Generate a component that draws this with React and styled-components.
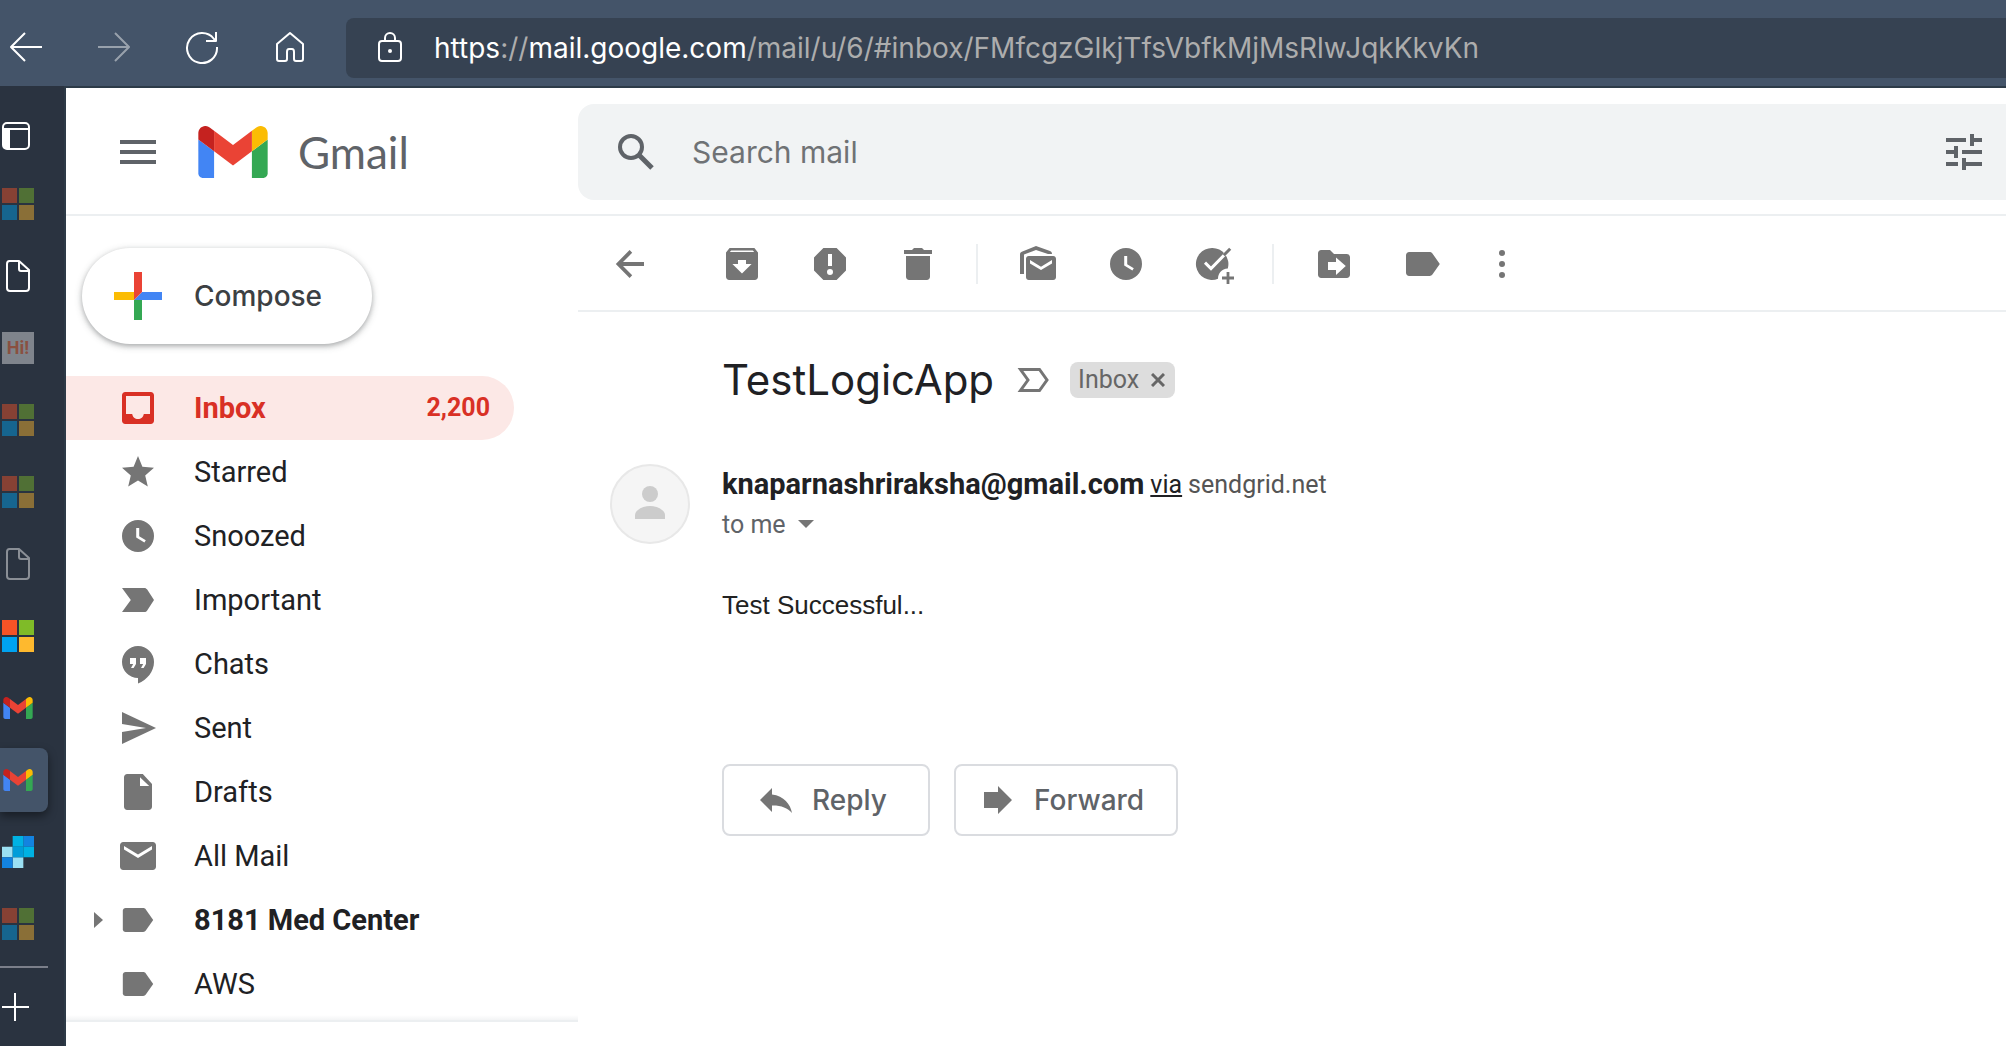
import React from "react";
import styled, { createGlobalStyle } from "styled-components";

const sans = `Roboto, "Liberation Sans", sans-serif`;
const display = `Inter, "Open Sans", sans-serif`;
const grey = "#757575";
const slate = "#5f6368";
const line = "#eceff1";

const GlobalStyle = createGlobalStyle`
  * { box-sizing: border-box; }
  body { margin: 0; background: #fff; font-family: ${sans}; color: #202124; }
  button { border: 0; padding: 0; background: none; font: inherit; color: inherit; cursor: pointer; }
  svg { display: block; flex: none; }
`;

/* ---------- Layout ---------- */

const Browser = styled.div`
  display: flex;
  flex-direction: column;
  min-height: 100vh;
`;

const TopBar = styled.header`
  display: flex;
  align-items: center;
  height: 88px;
  padding: 8px 0 0;
  background: #445469;
  border-bottom: 2px solid #2d3b48;
`;

const TopButtons = styled.div`
  display: flex;
  align-items: center;
  width: 346px;
  flex: none;
`;

const TopButton = styled.button`
  display: flex;
  justify-content: center;
  width: 88px;
  margin-left: ${(p) => (p.$first ? "-18px" : "0")};
  color: #fff;
  opacity: ${(p) => (p.$dim ? 0.45 : 1)};
`;

const AddressBar = styled.div`
  display: flex;
  align-items: center;
  flex: 1;
  min-width: 0;
  height: 60px;
  margin-top: 2px;
  padding-left: 24px;
  gap: 24px;
  border-radius: 8px 0 0 8px;
  background: #364252;
  color: #fff;
`;

const Url = styled.div`
  font: 400 28px/36px Inter, sans-serif;
  white-space: nowrap;
  color: #adadad;
`;

const UrlStrong = styled.span`
  color: #fff;
`;

const Body = styled.div`
  display: flex;
  flex: 1;
`;

const TabRail = styled.nav`
  display: flex;
  flex-direction: column;
  flex: none;
  width: 66px;
  margin-top: -2px;
  padding-top: 18px;
  background: #2a3340;
  border-right: 2px solid #2d3a47;
`;

const TabList = styled.div`
  display: flex;
  flex-direction: column;
  gap: 8px;
  padding: 4px 0 10px;
  border-bottom: 2px solid #7b7f8a;
  width: 48px;
`;

const Tab = styled.button`
  display: flex;
  align-items: center;
  width: 48px;
  height: 64px;
  padding-left: 2px;
  border-radius: 0 8px 8px 0;
  color: #fff;
  background: ${(p) => (p.$active ? "#445469" : "none")};
  box-shadow: ${(p) => (p.$active ? "0 4px 10px rgba(0, 0, 0, 0.45)" : "none")};
`;

const NewTab = styled(Tab)`
  height: 78px;
`;

const Fade = styled.span`
  opacity: ${(p) => (p.$dim ? 0.45 : 1)};
`;

const HiIcon = styled.span`
  display: flex;
  align-items: center;
  justify-content: center;
  width: 32px;
  height: 32px;
  background: #7f848c;
  color: #8a5040;
  font: 700 18px/32px ${sans};
`;

const Mail = styled.div`
  display: flex;
  flex-direction: column;
  flex: 1;
  min-width: 0;
`;

const MailHeader = styled.div`
  display: flex;
  padding: 16px 0 14px;
  border-bottom: 2px solid ${line};
`;

const Brand = styled.div`
  display: flex;
  align-items: center;
  flex: none;
  width: 512px;
  padding-left: 48px;
  gap: 36px;
`;

const IconButton = styled.button`
  display: flex;
  align-items: center;
  justify-content: center;
  flex: none;
  width: 48px;
  height: 48px;
  color: ${slate};
`;

const BrandLink = styled.a`
  display: flex;
  align-items: center;
  gap: 30px;
  color: ${slate};
  font: 400 44px/52px Lato, "Open Sans", sans-serif;
  text-decoration: none;
`;

const Search = styled.form`
  display: flex;
  align-items: center;
  flex: 1;
  min-width: 0;
  height: 96px;
  padding: 0 18px 0 34px;
  gap: 32px;
  border-radius: 16px 0 0 16px;
  background: #f1f3f4;
`;

const SearchInput = styled.input`
  flex: 1;
  min-width: 0;
  border: 0;
  padding: 0;
  outline: 0;
  background: none;
  font: 400 30px/40px ${display};
  color: #202124;
  &::placeholder {
    color: #6f7275;
    opacity: 1;
  }
`;

const Columns = styled.div`
  display: flex;
  flex: 1;
  align-items: flex-start;
`;

const Side = styled.aside`
  flex: none;
  width: 512px;
  padding: 32px 0 4px;
  border-bottom: 2px solid ${line};
  background: linear-gradient(to top, #f3f4f5, #fff 5px);
`;

const Compose = styled.button`
  display: flex;
  align-items: center;
  height: 96px;
  margin: 0 0 32px 16px;
  padding: 0 50px 0 32px;
  gap: 32px;
  border-radius: 48px;
  background: #fff;
  box-shadow: 0 2px 4px rgba(60, 64, 67, 0.3), 0 2px 6px 2px rgba(60, 64, 67, 0.15);
  color: #3c4043;
  font: 500 28px/36px ${display};
`;

const Folder = styled.a`
  display: flex;
  align-items: center;
  height: 64px;
  width: 448px;
  padding: 0 24px 0 22px;
  border-radius: 0 32px 32px 0;
  background: ${(p) => (p.$active ? "#fce8e6" : "none")};
  color: ${(p) => (p.$active ? "#d93025" : "#202124")};
  font-size: 29px;
  line-height: 36px;
  font-weight: ${(p) => (p.$bold ? 700 : 400)};
  text-decoration: none;
`;

const Expander = styled.span`
  width: 30px;
  padding-left: 6px;
  color: ${grey};
`;

const FolderIcon = styled.span`
  margin-right: 36px;
  color: ${(p) => (p.$active ? "#d93025" : grey)};
`;

const Count = styled.span`
  margin-left: auto;
  font-size: 25px;
`;

const Main = styled.main`
  flex: 1;
  min-width: 0;
`;

const Toolbar = styled.div`
  display: flex;
  align-items: center;
  height: 96px;
  padding: 2px 0 0 10px;
  border-bottom: 2px solid ${line};
  color: ${grey};
`;

const Tool = styled.button`
  display: flex;
  align-items: center;
  justify-content: center;
  width: ${(p) => (p.$narrow ? "72px" : "88px")};
  height: 64px;
  margin-right: ${(p) => (p.$spaced ? "22px" : "0")};
`;

const Divider = styled.span`
  width: 2px;
  height: 40px;
  margin: 0 16px 0 14px;
  background: ${line};
`;

const Subject = styled.div`
  display: flex;
  align-items: center;
  padding: 40px 0 56px 144px;
`;

const Title = styled.h1`
  margin: 0;
  font: 400 42px/56px ${display};
`;

const Marker = styled.button`
  margin: 0 16px 0 20px;
  color: ${grey};
`;

const Chip = styled.span`
  display: flex;
  align-items: center;
  height: 36px;
  padding: 0 10px 0 8px;
  gap: 12px;
  border-radius: 8px;
  background: #ddd;
  color: #666;
  font-size: 25px;
  line-height: 32px;
`;

const Message = styled.article`
  display: grid;
  grid-template-columns: 80px 1fr;
  column-gap: 32px;
  padding-left: 32px;
`;

const Line = styled.div`
  display: flex;
  align-items: center;
  height: 40px;
  gap: 6px;
  font-size: ${(p) => (p.$small ? "25px" : "29px")};
  color: ${(p) => (p.$small ? slate : "#202124")};
`;

const Sender = styled.strong`
  font-weight: 700;
`;

const Via = styled.a`
  color: #202124;
  font-size: 25px;
`;

const Domain = styled.span`
  color: #555;
  font-size: 25px;
`;

const Caret = styled.button`
  margin-left: 6px;
  color: ${grey};
`;

const Text = styled.p`
  grid-column: 2;
  margin: 40px 0 138px;
  font: 400 26px/42px "Liberation Sans", Arial, sans-serif;
  color: #222;
`;

const Actions = styled.div`
  grid-column: 2;
  display: flex;
  gap: 24px;
`;

const Action = styled.button`
  display: flex;
  align-items: center;
  height: 72px;
  width: ${(p) => (p.$wide ? "224px" : "208px")};
  padding-left: ${(p) => (p.$wide ? "22px" : "32px")};
  gap: 16px;
  border: 2px solid #dadce0;
  border-radius: 8px;
  color: ${slate};
  font: 500 28px/36px ${display};
`;

const ActionIcon = styled.span`
  color: ${grey};
`;

/* ---------- Icons ---------- */

const Glyph = ({ children, size = 40 }) => (
  <svg width={size} height={size} viewBox="0 0 20 20" fill="currentColor" fillRule="evenodd" aria-hidden="true">
    {children}
  </svg>
);

const Outline = ({ children, w = 36, h = 36 }) => (
  <svg width={w} height={h} viewBox={`0 0 ${w} ${h}`} fill="none" stroke="currentColor" strokeWidth="2" strokeLinejoin="round" aria-hidden="true">
    {children}
  </svg>
);

const GmailMark = ({ width, height }) => (
  <svg width={width} height={height} viewBox="52 42 88 66" aria-hidden="true">
    <path fill="#4285f4" d="M58 108h14V74L52 59v43c0 3.32 2.69 6 6 6" />
    <path fill="#34a853" d="M120 108h14c3.32 0 6-2.69 6-6V59l-20 15" />
    <path fill="#fbbc04" d="M120 48v26l20-15v-8c0-7.42-8.47-11.65-14.4-7.2" />
    <path fill="#ea4335" d="M72 74V48l24 18 24-18v26L96 92" />
    <path fill="#c5221f" d="M52 51v8l20 15V48l-5.6-4.2c-5.94-4.45-14.4-.22-14.4 7.2" />
  </svg>
);

const MicrosoftMark = () => (
  <svg width="32" height="32" viewBox="0 0 32 32" aria-hidden="true">
    <path fill="#f65326" d="M0 0h15v15H0z" />
    <path fill="#7fbb28" d="M17 0h15v15H17z" />
    <path fill="#00a3f0" d="M0 17h15v15H0z" />
    <path fill="#feb92e" d="M17 17h15v15H17z" />
  </svg>
);

const SendgridMark = () => (
  <svg width="32" height="32" viewBox="0 0 33 33" aria-hidden="true">
    <path fill="#9be0f3" d="M0 11h11v11H0zM11 22h11v11H11z" />
    <path fill="#1383e0" d="M0 22h11v11H0zM22 0h11v11H22z" />
    <path fill="#00b2e3" d="M11 0h11v11H11zM22 11h11v11H22z" />
    <path fill="#009dd9" d="M11 11h11v11H11z" />
  </svg>
);

const PageIcon = () => (
  <Outline w={32} h={32}>
    <path d="M7.500 1h9.500L27 10v18c0 1.700-1.300 3-3 3H8c-1.700 0-3-1.300-3-3V4c0-1.700 1-3 2.500-3zM17 1v8c0 1.300.7 2 2 2h8" />
  </Outline>
);

const PanelIcon = () => (
  <Outline w={32} h={32}>
    <rect x="1" y="3" width="26" height="26" rx="4" />
    <path d="M2 9h24" />
    <path d="M1 9h7v20H4c-2 0-3-1-3-3z" fill="currentColor" stroke="none" />
  </Outline>
);

const icons = {
  inbox: <path d="M3.600 2h12.800c.9 0 1.600.7 1.600 1.600v12.800c0 .9-.7 1.600-1.600 1.600H3.600c-.9 0-1.600-.7-1.600-1.600V3.600C2 2.700 2.700 2 3.600 2zM4 4v9h3.100c.2 1.500 1.400 2.500 2.900 2.500s2.700-1 2.900-2.500H16V4z" />,
  star: <path d="M10 14.300l4.900 3-1.300-5.600L18 7.900l-5.800-.5L10 2 7.800 7.400 2 7.900l4.400 3.800-1.300 5.600z" />,
  clock: <path d="M10 2a8 8 0 1 0 0 16 8 8 0 0 0 0-16zM9.100 6h1.500v4.100l3.300 2-.7 1.200-4.100-2.500z" />,
  important: <path d="M2 4h11.200c.6 0 1 .3 1.400.8L18 10l-3.400 5.200c-.4.5-.8.8-1.400.8H2l4.400-6z" />,
  chats: <path d="M10 1a8 8 0 0 0 0 16v2.700c4.600-1.700 8-6 8-10.700a8 8 0 0 0-8-8zM6 7v3h1.600l-1.100 2h1.300L9 10V7zM11 7v3h1.600l-1.100 2h1.300l1.200-2V7z" />,
  sent: <path d="M2 2l17 8-17 8v-6l12-2-12-2z" />,
  drafts: <path d="M4.600 1h7.800L17 6v11.400c0 .9-.7 1.600-1.600 1.600H4.600c-.9 0-1.600-.7-1.600-1.600V2.600C3 1.700 3.700 1 4.600 1zM11 2.600V7h4.600z" />,
  mail: <path d="M2.600 3h14.800c.9 0 1.600.7 1.600 1.600v10.800c0 .9-.7 1.600-1.600 1.600H2.600c-.9 0-1.600-.7-1.600-1.600V4.600C1 3.700 1.700 3 2.600 3zM3 5v1.800l7 4.200 7-4.200V5l-7 4.200z" />,
  tag: <path d="M3.800 4h8.800c.6 0 1 .3 1.300.7l3.700 5.300-3.700 5.300c-.3.400-.7.700-1.300.7H3.800c-.8 0-1.400-.6-1.400-1.400V5.400C2.400 4.600 3 4 3.800 4z" />,
  back: <path d="M16 9H5.500l4.600-4.600L8.800 3 1.900 10l6.900 7 1.300-1.400L5.500 11H16z" />,
  archive: <path d="M16.200 2H3.800L2 4.200v12.200c0 .9.700 1.600 1.600 1.600h12.800c.9 0 1.600-.7 1.600-1.600V4.200zM4.600 3.200h10.800l.7.800H3.900zM10 14.800L5.200 10H8V8h4v2h2.800z" />,
  spam: <path d="M6.700 2h6.600L18 6.700v6.600L13.300 18H6.700L2 13.300V6.700zM9 5v6h2V5zM10 12.500a1.500 1.500 0 1 0 0 3 1.500 1.500 0 0 0 0-3z" />,
  trash: <path d="M13 3l-1-1H8L7 3H3v2h14V3zM4 6v10.400c0 .9.700 1.600 1.600 1.600h8.800c.9 0 1.600-.7 1.600-1.600V6z" />,
  unread: (
    <>
      <path d="M1 15V5.200c0-.7.3-1.100.9-1.300L9 1l7 2.500c.6.200 1 .7 1 1.500h-2L9 3 3 5.200V15z" />
      <path d="M5.400 6h12.200c.8 0 1.400.6 1.400 1.400v9.200c0 .8-.6 1.400-1.400 1.400H5.400c-.8 0-1.400-.6-1.400-1.400V7.400C4 6.600 4.600 6 5.400 6zM6 8v1.700l5.500 3.300L17 9.700V8l-5.500 3.400z" />
    </>
  ),
  task: (
    <>
      <path d="M9 2a8 8 0 1 0 3 15.400c0-2.900 1.800-5 4.900-5.200A8 8 0 0 0 9 2z" />
      <path d="M5.500 9.300l3 3L16.400 4.200" fill="none" stroke="#fff" strokeWidth="1.500" />
      <path d="M14.900 5.600l3.200-3.200" fill="none" stroke="currentColor" strokeWidth="1.500" />
      <path d="M16.300 14h1.400v2.300H20v1.400h-2.300V20h-1.400v-2.300H14v-1.400h2.300z" />
    </>
  ),
  move: <path d="M8 3H3.600C2.700 3 2 3.700 2 4.600v10.800c0 .9.700 1.600 1.600 1.600h12.800c.9 0 1.600-.7 1.600-1.600V6.600c0-.9-.7-1.600-1.600-1.600H10zM7 9v4h4v2.500l4.900-4.500L11 6.700V9z" />,
  label: <path d="M13.800 4H3.600C2.700 4 2 4.700 2 5.600v8.800c0 .9.700 1.600 1.600 1.600h10.200c.6 0 1.100-.3 1.400-.7L18.900 10l-3.700-5.300c-.3-.4-.8-.7-1.400-.7z" />,
  more: (
    <>
      <circle cx="10" cy="4.500" r="1.500" />
      <circle cx="10" cy="10" r="1.500" />
      <circle cx="10" cy="15.500" r="1.500" />
    </>
  ),
  reply: <path d="M8 7.200V4L2 10l6 6v-3.200c4.500-.1 7.800 1.200 10 3.700C17.200 12 14 7.900 8 7.200z" />,
  forward: <path d="M3 6h7V3l7 7-7 7v-3H3z" />,
};

const Icon = ({ name }) => <Glyph>{icons[name]}</Glyph>;

/* ---------- Data ---------- */

const tabs = [
  { title: "Microsoft", mark: <MicrosoftMark />, dim: true },
  { title: "New page", mark: <PageIcon /> },
  { title: "Greeting", mark: <HiIcon>Hi!</HiIcon> },
  { title: "Microsoft", mark: <MicrosoftMark />, dim: true },
  { title: "Microsoft", mark: <MicrosoftMark />, dim: true },
  { title: "Blank page", mark: <PageIcon />, dim: true },
  { title: "Microsoft", mark: <MicrosoftMark /> },
  { title: "Gmail", mark: <GmailMark width={32} height={22} /> },
  { title: "Gmail", mark: <GmailMark width={32} height={22} />, active: true },
  { title: "SendGrid", mark: <SendgridMark /> },
  { title: "Microsoft", mark: <MicrosoftMark />, dim: true },
];

const folders = [
  { name: "Inbox", icon: "inbox", count: "2,200", active: true, bold: true },
  { name: "Starred", icon: "star" },
  { name: "Snoozed", icon: "clock" },
  { name: "Important", icon: "important" },
  { name: "Chats", icon: "chats" },
  { name: "Sent", icon: "sent" },
  { name: "Drafts", icon: "drafts" },
  { name: "All Mail", icon: "mail" },
  { name: "8181 Med Center", icon: "tag", bold: true, nested: true },
  { name: "AWS", icon: "tag" },
];

const toolGroups = [
  [["archive", "Archive"], ["spam", "Report spam"], ["trash", "Delete"]],
  [["unread", "Mark as unread"], ["clock", "Snooze"], ["task", "Add to tasks"]],
  [["move", "Move to"], ["label", "Labels"], ["more", "More"]],
];

/* ---------- Page ---------- */

export default function App() {
  return (
    <Browser>
      <GlobalStyle />
      <TopBar>
        <TopButtons>
          <TopButton $first aria-label="Back">
            <Outline><path d="M34 18H3M17 4L3 18l14 14" /></Outline>
          </TopButton>
          <TopButton $dim aria-label="Forward">
            <Outline><path d="M2 18h31M19 4l14 14-14 14" /></Outline>
          </TopButton>
          <TopButton aria-label="Reload">
            <Outline><path d="M33 18a15 15 0 1 1-3-8l2 2M32 3v9H22" /></Outline>
          </TopButton>
          <TopButton aria-label="Home">
            <Outline><path d="M18 4L5 15v15c0 1 1 2 2 2h6c1 0 2-1 2-2v-7c0-2 1-3 2-3h3c1 0 2 1 2 3v7c0 1 1 2 2 2h5c1 0 2-1 2-2V15z" /></Outline>
          </TopButton>
        </TopButtons>
        <AddressBar>
          <Outline w={40}>
            <rect x="9" y="11" width="22" height="20" rx="3" />
            <path d="M15 11V8a5 5 0 0 1 10 0v3" />
            <circle cx="20" cy="21" r="2" fill="currentColor" stroke="none" />
          </Outline>
          <Url>
            <UrlStrong>https</UrlStrong>://<UrlStrong>mail.google.com</UrlStrong>/mail/u/6/#inbox/FMfcgzGlkjTfsVbfkMjMsRlwJqkKkvKn
          </Url>
        </AddressBar>
      </TopBar>

      <Body>
        <TabRail aria-label="Tabs">
          <Tab aria-label="Tab panel"><PanelIcon /></Tab>
          <TabList>
            {tabs.map((t, i) => (
              <Tab key={i} $active={t.active} aria-label={t.title}>
                <Fade $dim={t.dim}>{t.mark}</Fade>
              </Tab>
            ))}
          </TabList>
          <NewTab aria-label="New tab">
            <Outline w={28} h={28}><path d="M13 0v28M0 14h27" /></Outline>
          </NewTab>
        </TabRail>

        <Mail>
          <MailHeader>
            <Brand>
              <IconButton aria-label="Main menu">
                <svg width="36" height="24" viewBox="0 0 36 24" fill="currentColor" aria-hidden="true">
                  <path d="M0 0h36v4H0zM0 10h36v4H0zM0 20h36v4H0z" />
                </svg>
              </IconButton>
              <BrandLink href="#inbox">
                <GmailMark width={70} height={52} />
                Gmail
              </BrandLink>
            </Brand>
            <Search role="search">
              <IconButton type="button" aria-label="Search">
                <svg width="36" height="36" viewBox="0 0 36 36" fill="none" stroke="currentColor" strokeWidth="4" aria-hidden="true">
                  <circle cx="13" cy="13" r="11" />
                  <path d="M21 21l13 13" strokeWidth="5" />
                </svg>
              </IconButton>
              <SearchInput type="text" aria-label="Search mail" placeholder="Search mail" />
              <IconButton type="button" aria-label="Search options">
                <svg width="36" height="36" viewBox="0 0 36 36" fill="currentColor" aria-hidden="true">
                  <path d="M0 4h20v4H0zM24 0h4v4h8v4h-8v4h-4zM0 16h8v-4h4v12H8v-4H0zM16 16h20v4H16zM0 28h12v4H0zM16 24h4v4h16v4H20v4h-4z" />
                </svg>
              </IconButton>
            </Search>
          </MailHeader>

          <Columns>
            <Side>
              <Compose>
                <svg width="48" height="48" viewBox="0 0 48 48" aria-hidden="true">
                  <path fill="#fbbc04" d="M0 20h20v8H0z" />
                  <path fill="#34a853" d="M20 28h8v20h-8z" />
                  <path fill="#4285f4" d="M28 20h20v8H20z" />
                  <path fill="#ea4335" d="M20 0h8v20l-8 8z" />
                </svg>
                Compose
              </Compose>
              <nav aria-label="Folders">
                {folders.map((f) => (
                  <Folder key={f.name} href="#folder" $active={f.active} $bold={f.bold}>
                    <Expander>
                      {f.nested && (
                        <svg width="9" height="16" viewBox="0 0 9 16" fill="currentColor" aria-hidden="true">
                          <path d="M0 0l9 8-9 8z" />
                        </svg>
                      )}
                    </Expander>
                    <FolderIcon $active={f.active}><Icon name={f.icon} /></FolderIcon>
                    {f.name}
                    {f.count && <Count>{f.count}</Count>}
                  </Folder>
                ))}
              </nav>
            </Side>

            <Main>
              <Toolbar>
                <Tool $spaced aria-label="Back to inbox"><Icon name="back" /></Tool>
                {toolGroups.map((group, g) => (
                  <React.Fragment key={g}>
                    {g > 0 && <Divider />}
                    {group.map(([name, label]) => (
                      <Tool key={name} $narrow={name === "more"} aria-label={label}>
                        <Icon name={name} />
                      </Tool>
                    ))}
                  </React.Fragment>
                ))}
              </Toolbar>

              <Subject>
                <Title>TestLogicApp</Title>
                <Marker aria-label="Mark as important">
                  <svg width="40" height="24" viewBox="0 0 40 24" fill="none" stroke="currentColor" strokeWidth="3" aria-hidden="true">
                    <path d="M6.500 1.500h19L33 12l-7.500 10.500h-19L14 12z" />
                  </svg>
                </Marker>
                <Chip>
                  Inbox
                  <button aria-label="Remove label">
                    <svg width="14" height="14" viewBox="0 0 14 14" stroke="currentColor" strokeWidth="3" aria-hidden="true">
                      <path d="M1 1l12 12M13 1L1 13" />
                    </svg>
                  </button>
                </Chip>
              </Subject>

              <Message>
                <svg width="80" height="80" viewBox="0 0 80 80" aria-hidden="true">
                  <circle cx="40" cy="40" r="39" fill="#f5f5f5" stroke="#e8e8e8" strokeWidth="2" />
                  <circle cx="40" cy="30" r="8" fill="#ccc" />
                  <path fill="#ccc" d="M25 55v-4c0-5 8-9 15-9s15 4 15 9v4z" />
                </svg>
                <div>
                  <Line>
                    <Sender>knaparnashriraksha@gmail.com</Sender>
                    <Via href="#via">via</Via>
                    <Domain>sendgrid.net</Domain>
                  </Line>
                  <Line $small>
                    to me
                    <Caret aria-label="Show details">
                      <svg width="16" height="8" viewBox="0 0 16 8" fill="currentColor" aria-hidden="true">
                        <path d="M0 0h16L8 8z" />
                      </svg>
                    </Caret>
                  </Line>
                </div>
                <Text>Test Successful...</Text>
                <Actions>
                  <Action>
                    <ActionIcon><Icon name="reply" /></ActionIcon>
                    Reply
                  </Action>
                  <Action $wide>
                    <ActionIcon><Icon name="forward" /></ActionIcon>
                    Forward
                  </Action>
                </Actions>
              </Message>
            </Main>
          </Columns>
        </Mail>
      </Body>
    </Browser>
  );
}
